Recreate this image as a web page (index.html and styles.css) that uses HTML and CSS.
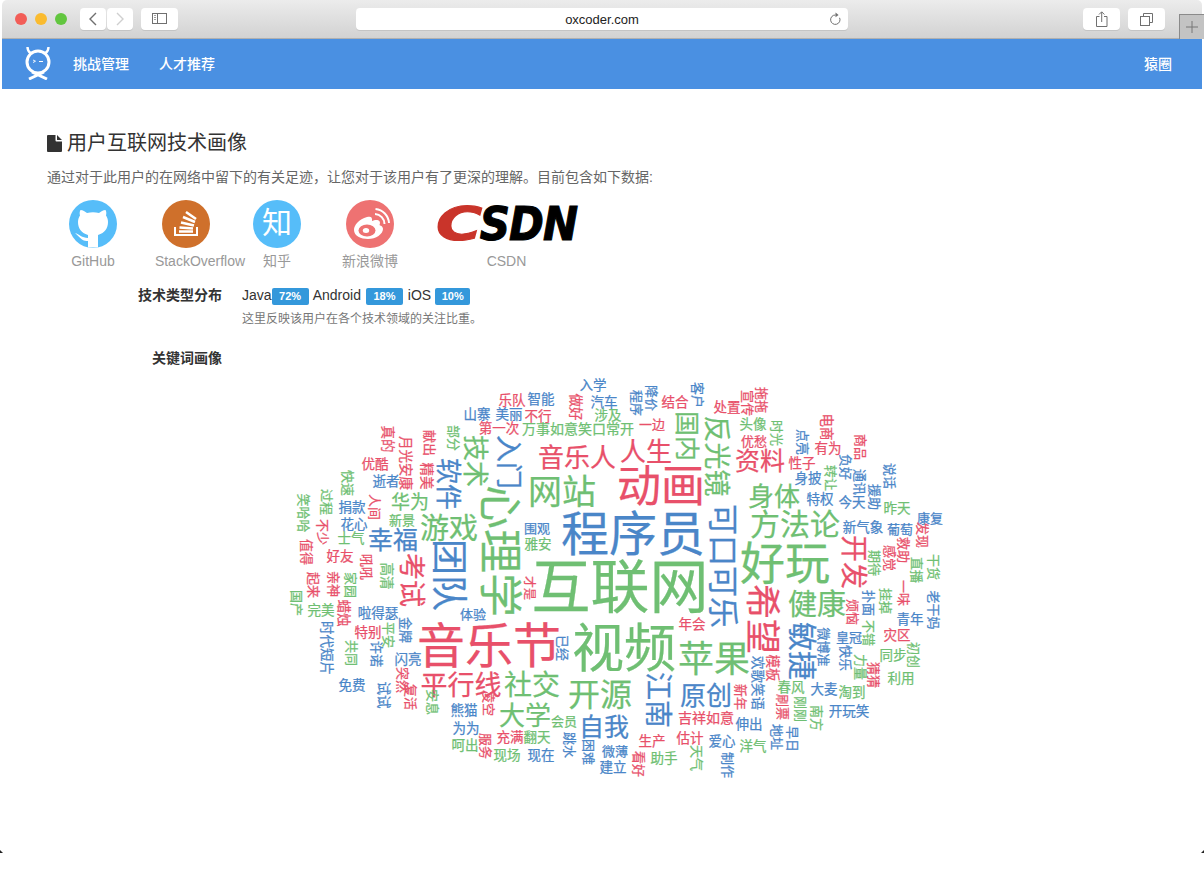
FILE: index.html
```html
<!DOCTYPE html>
<html>
<head>
	<title>用户互联网技术画像</title>
	<meta charset="utf-8">
	<link rel="stylesheet" href="styles.css">
</head>
<body>
	<div class="window">
		<div class="toolbar">
			<div class="lights">
				<span class="light red"></span>
				<span class="light yellow"></span>
				<span class="light green"></span>
			</div>
			<div class="nav-buttons">
				<span class="tool-btn arrow"><svg width="10" height="14" viewBox="0 0 10 14"><path d="M8 1 L2 7 L8 13" fill="none" stroke="#6f6f6f" stroke-width="1.4"/></svg></span>
				<span class="tool-btn arrow"><svg width="10" height="14" viewBox="0 0 10 14"><path d="M2 1 L8 7 L2 13" fill="none" stroke="#cfcfcf" stroke-width="1.4"/></svg></span>
			</div>
			<span class="tool-btn sidebar-btn"><svg width="15" height="12" viewBox="0 0 15 12"><rect x=".5" y=".5" width="14" height="10" fill="none" stroke="#707070"/><path d="M5.5 .5 V10.5" stroke="#707070"/><path d="M2 2.500 H4 M2 4.500 H4 M2 6.500 H4" stroke="#a0a0a0"/></svg></span>
			<div class="address">
				<span class="address-text">oxcoder.com</span>
				<svg class="reload" width="12" height="14" viewBox="0 0 12 14"><path d="M6.5 3 A4.7 4.7 0 1 0 10.6 5.8" fill="none" stroke="#707070" stroke-width="1"/><path d="M6.5 .6 L9.6 3 L6.5 5.2 Z" fill="#707070"/></svg>
			</div>
			<span class="tool-btn wide-btn"><svg width="12" height="16" viewBox="0 0 12 16"><path d="M3.5 5.5 H.5 V15.5 H11 V5.5 H8" fill="none" stroke="#707070"/><path d="M5.7 11 V1 M3 3.5 L5.7 .8 L8.4 3.5" fill="none" stroke="#707070"/></svg></span>
			<span class="tool-btn wide-btn"><svg width="13" height="13" viewBox="0 0 13 13"><rect x=".5" y="3.5" width="9" height="9" fill="none" stroke="#707070"/><path d="M3.5 3.5 V.5 H12.5 V9.5 H9.5" fill="none" stroke="#707070"/></svg></span>
			<span class="new-tab"><svg width="12" height="12" viewBox="0 0 12 12"><path d="M6 0 V12 M0 6 H12" stroke="#767676"/></svg></span>
		</div>

		<div class="navbar">
			<svg class="logo" width="28" height="34" viewBox="0 0 28 34">
				<path d="M3.500 1 Q3.500 5 6.500 7 M24.500 1 Q24.500 5 21.500 7" fill="none" stroke="#fff" stroke-width="2.400"/>
				<circle cx="14" cy="16" r="11" fill="none" stroke="#fff" stroke-width="3"/>
				<path d="M8 26 L23 33 M20 26 L5 33" fill="none" stroke="#fff" stroke-width="3"/>
				<path d="M9 14 L11.500 15.200 L9 16.500" fill="none" stroke="#fff" stroke-width=".9"/>
				<path d="M15 15.500 H19" stroke="#fff" stroke-width="1"/>
			</svg>
			<a class="nav-link">挑战管理</a>
			<a class="nav-link">人才推荐</a>
			<a class="nav-link nav-right">猿圈</a>
		</div>

		<div class="content">
			<h1 class="title">
				<svg width="15" height="17" viewBox="0 0 15 17"><path d="M0 1 Q0 0 1 0 H8.500 V5.500 Q8.500 6.500 9.500 6.500 H15 V16 Q15 17 14 17 H1 Q0 17 0 16 Z M10 0 L15 5 H10 Z" fill="#333"/></svg>
				用户互联网技术画像
			</h1>
			<p class="intro">通过对于此用户的在网络中留下的有关足迹，让您对于该用户有了更深的理解。目前包含如下数据:</p>

			<div class="sources">
				<div class="source s-github">
					<svg width="48" height="48" viewBox="0 0 48 48"><circle cx="24" cy="24" r="24" fill="#56bdf9"/><path d="M19 47.500 V41 C13 42 10 36 6 33 C10 34 13 38 19 38 V35 C12 33 9 28 9 22 C9 19 10 17 11 15.500 C10.500 13.500 10.500 11.500 11.500 10 C14 10 16 11.500 18 13 C22 12 26 12 30 13 C32 11.500 34 10 36.500 10 C37.500 11.500 37.500 13.500 37 15.500 C38 17 39 19 39 22 C39 28 36 33 29 35 V47.500 Z" fill="#fff"/></svg>
					<span>GitHub</span>
				</div>
				<div class="source s-stack">
					<svg width="48" height="48" viewBox="0 0 48 48"><circle cx="24" cy="24" r="24" fill="#cf702b"/><path d="M13 27 V35 H35 V27" fill="none" stroke="#fff" stroke-width="2"/><path d="M17 31.500 H31 M17.500 27.500 L31 28.500 M19 22.500 L32 25.500 M21 17 L33 22 M24 12 L34 19" fill="none" stroke="#fff" stroke-width="2.600"/></svg>
					<span>StackOverflow</span>
				</div>
				<div class="source s-zhihu">
					<span class="zhihu-mark">知</span>
					<span>知乎</span>
				</div>
				<div class="source s-weibo">
					<svg width="48" height="48" viewBox="0 0 48 48"><circle cx="24" cy="24" r="24" fill="#ee7272"/><path d="M21 17 C13 19 8 25 8 30 C8 36 15 39 22 39 C30 39 37 34 37 29 C37 26 34 25.500 33.500 25 C35 21.500 33 19.500 29 20 L26 21 C26.500 17 25 16 21 17 Z" fill="#fff"/><ellipse cx="21" cy="30.500" rx="8.500" ry="6" fill="#ee7272"/><ellipse cx="20" cy="30.500" rx="3.200" ry="2.500" fill="#fff"/><path d="M29 14 A10 10 0 0 1 38.500 24 M29.500 9 A15 15 0 0 1 43 23" fill="none" stroke="#fff" stroke-width="2"/></svg>
					<span>新浪微博</span>
				</div>
				<div class="source s-csdn">
					<div class="csdn-logo"><span class="csdn-c">C</span><span>SDN</span></div>
					<span>CSDN</span>
				</div>
			</div>

			<div class="row row-tech">
				<div class="row-label">技术类型分布</div>
				<div class="row-body">
					<div class="tech-list">
						Java<span class="badge b-java">72%</span>
						Android<span class="badge b-android">18%</span>
						iOS<span class="badge b-ios">10%</span>
					</div>
					<p class="tech-note">这里反映该用户在各个技术领域的关注比重。</p>
				</div>
			</div>

			<div class="row row-keywords">
				<div class="row-label">关键词画像</div>
			</div>

			<div class="cloud" id="cloud"></div>
		</div>
		<div class="corner corner-left"></div>
		<div class="corner corner-right"></div>
	</div>
	<script src="cloud.js"></script>
</body>
</html>
```

FILE: styles.css
```css
* {
	box-sizing: border-box;
}
html, body {
	margin: 0;
	height: 100%;
	background: #fff;
	overflow: hidden;
}
body {
	font-family: "Liberation Sans", "Noto Sans CJK SC", sans-serif;
	color: #333;
}
.window {
	position: relative;
	height: 852px;
	margin: 0 2px;
}
.toolbar {
	position: relative;
	height: 39px;
	display: flex;
	align-items: center;
	padding: 0 0 0 13px;
	background: linear-gradient(#ececec, #d2d2d2);
	border-bottom: 1px solid #b0b0b0;
	border-radius: 5px 5px 0 0;
}
.lights {
	display: flex;
	gap: 8px;
	margin-right: 13px;
}
.light {
	width: 12px;
	height: 12px;
	border-radius: 50%;
}
.red { background: #f25d57; }
.yellow { background: #fabb2f; }
.green { background: #62c63f; }
.nav-buttons {
	display: flex;
	gap: 1px;
	margin-right: 8px;
}
.tool-btn {
	display: flex;
	align-items: center;
	justify-content: center;
	height: 22px;
	background: #fff;
	border-radius: 4px;
	box-shadow: 0 1px 0 #c4c4c4;
}
.arrow {
	width: 26px;
}
.sidebar-btn {
	width: 37px;
}
.address {
	position: relative;
	width: 492px;
	height: 22px;
	margin-left: 178px;
	margin-right: 235px;
	display: flex;
	align-items: center;
	justify-content: center;
	background: #fff;
	border-radius: 4px;
	box-shadow: 0 1px 0 #c4c4c4;
}
.address-text {
	font-size: 13px;
	color: #222;
}
.reload {
	position: absolute;
	right: 7px;
	top: 4px;
}
.wide-btn {
	width: 37px;
	margin-right: 8px;
}
.new-tab {
	position: absolute;
	right: -2px;
	top: 14px;
	width: 25px;
	height: 25px;
	display: flex;
	align-items: center;
	justify-content: center;
	background: #c3c3c3;
	border: 1px solid #8a8a8a;
	border-bottom: none;
	border-right: none;
}
.navbar {
	height: 50px;
	display: flex;
	align-items: center;
	padding: 0 30px 2px 22px;
	background: #4a90e2;
}
.logo {
	margin-right: 21px;
}
.nav-link {
	font-size: 14px;
	font-weight: 500;
	color: #fff;
	margin-right: 30px;
}
.nav-right {
	margin-left: auto;
	margin-right: 0;
}
.content {
	padding: 41px 45px 0;
}
.title {
	display: flex;
	align-items: center;
	gap: 5px;
	margin: 0;
	height: 27px;
	font-size: 20px;
	font-weight: 400;
	line-height: 27px;
}
.intro {
	margin: 10px 0 0;
	font-size: 14px;
	line-height: 20px;
	color: #666;
}
.sources {
	display: flex;
	margin-top: 13px;
	height: 74px;
}
.source {
	display: flex;
	flex-direction: column;
	align-items: center;
	font-size: 14px;
	line-height: 16px;
	color: #999;
}
.source svg {
	margin-bottom: 5px;
}
.s-github { width: 48px; margin-left: 22px; }
.s-stack { width: 90px; margin-left: 38px; }
.s-stack svg { margin-right: 28px; }
.s-zhihu { width: 48px; margin-left: 8px; }
.s-weibo { width: 56px; margin-left: 41px; }
.s-csdn { width: 143px; margin-left: 37px; }
.zhihu-mark {
	width: 48px;
	height: 48px;
	margin-bottom: 5px;
	border-radius: 50%;
	background: #56bdf9;
	color: #fff;
	font-size: 30px;
	line-height: 46px;
	text-align: center;
}
.csdn-logo {
	height: 53px;
	display: flex;
	align-items: center;
	font-family: "DejaVu Sans", sans-serif;
	font-size: 42px;
	font-weight: bold;
	font-style: italic;
	letter-spacing: -1px;
	color: #000;
	-webkit-text-stroke: 1px currentColor;
	transform: scaleY(1.08);
	padding-bottom: 3px;
}
.csdn-c {
	display: inline-block;
	width: 44px;
	color: #c9342a;
	transform: scaleX(1.5);
	transform-origin: left center;
}
.row {
	display: flex;
}
.row-label {
	width: 175px;
	text-align: right;
	font-size: 14px;
	font-weight: bold;
	line-height: 17px;
	color: #333;
}
.row-body {
	margin-left: 20px;
}
.row-tech {
	margin-top: 13px;
}
.tech-list {
	font-size: 14px;
	line-height: 17px;
	color: #333;
}
.badge {
	display: inline-block;
	height: 17px;
	margin-right: 1px;
	vertical-align: top;
	margin-top: 1px;
	border-radius: 2px;
	background: #3498db;
	color: #fff;
	font-size: 11px;
	font-weight: bold;
	line-height: 17px;
	text-align: center;
}
.b-java { width: 37px; }
.b-android { width: 37px; margin-left: 5px; }
.b-ios { width: 35px; margin-left: 4px; }
.tech-note {
	margin: 6px 0 0;
	font-size: 12px;
	line-height: 16px;
	color: #777;
}
.row-keywords {
	margin-top: 23px;
}
.cloud {
	position: absolute;
	left: -2px;
	top: 0;
	width: 1204px;
	height: 852px;
	font-family: "Noto Sans CJK SC", sans-serif;
}
.word {
	position: absolute;
	line-height: 1;
	white-space: nowrap;
	-webkit-text-stroke: .25px currentColor;
	transform: translate(-50%, -50%);
}
.word.vert {
	transform: translate(-50%, -50%) rotate(90deg);
}
.word.g { color: #6fbf73; }
.word.b { color: #4a86c8; }
.word.r { color: #e8506a; }
.corner {
	position: absolute;
	bottom: -1px;
	width: 3px;
	height: 3px;
	background: #222;
}
.corner-left {
	left: -2px;
	clip-path: polygon(0 0, 100% 100%, 0 100%);
}
.corner-right {
	right: -2px;
	clip-path: polygon(100% 0, 100% 100%, 0 100%);
}
```

FILE: cloud.js
```js
// word, x, y, font size, colour, vertical
const words = [
	["互联网", 620, 582, 59, "g"], ["程序员", 633, 530, 48, "b"], ["音乐节", 489, 642, 48, "r"],
	["视频", 624, 645, 52, "g"], ["动画", 661, 483, 44, "r"], ["好玩", 785, 560, 45, "g"],
	["苹果", 714, 656, 36, "g"], ["网站", 562, 490, 34, "g"], ["开源", 600, 692, 32, "g"],
	["原创", 706, 694, 26, "b"], ["平行线", 461, 683, 27, "r"], ["社交", 532, 683, 28, "g"],
	["大学", 525, 714, 26, "g"], ["自我", 604, 725, 25, "b"], ["音乐人", 577, 456, 26, "r"],
	["人生", 646, 450, 26, "r"], ["方法论", 795, 522, 30, "g"], ["身体", 774, 495, 26, "g"],
	["资料", 760, 459, 25, "r"], ["健康", 817, 602, 29, "g"], ["游戏", 449, 526, 29, "g"],
	["幸福", 393, 538, 25, "b"], ["华为", 410, 500, 19, "g"],

	["心理学", 503, 551, 44, "g", 1], ["团队", 452, 575, 36, "b", 1], ["考试", 413, 580, 27, "r", 1],
	["软件", 450, 484, 26, "b", 1], ["技术", 477, 461, 26, "g", 1], ["入门", 510, 462, 27, "b", 1],
	["反光镜", 718, 456, 27, "g", 1], ["国内", 688, 436, 25, "g", 1], ["可口可乐", 725, 566, 31, "b", 1],
	["希望", 765, 619, 35, "r", 1], ["敏捷", 803, 651, 29, "b", 1], ["江南", 660, 700, 28, "b", 1],
	["开发", 855, 562, 27, "r", 1],

	["入学", 593, 385, 13.5, "b"], ["乐队", 512, 400, 13.5, "r"], ["智能", 541, 399, 13.5, "b"],
	["汽车", 604, 402, 13.5, "b"], ["做好", 576, 407, 13.5, "r", 1], ["山寨", 477, 414, 13.5, "b"],
	["美丽", 509, 414, 13.5, "b"], ["不行", 538, 416, 13.5, "r"], ["涉及", 608, 415, 13.5, "g"],
	["第一次", 499, 428, 13.5, "r"], ["万事如意笑口常开", 578, 428, 14, "g"], ["部分", 454, 438, 13, "g", 1],
	["真的", 388, 439, 13.5, "r", 1], ["月光安康", 406, 463, 13.5, "r", 1], ["献出", 430, 443, 13, "r", 1],
	["精美", 427, 476, 13.5, "r", 1], ["优酷", 375, 464, 13.5, "r"], ["逝者", 386, 481, 13.5, "b"],
	["快速", 348, 483, 13, "g", 1], ["过程", 327, 502, 13, "g", 1], ["捐款", 352, 507, 13.5, "b"],
	["人间", 375, 507, 13, "r", 1], ["笑哈哈", 304, 513, 13, "g", 1], ["不少", 323, 532, 13, "r", 1],
	["花心", 354, 524, 13.5, "b"], ["新景", 402, 519, 13, "g"], ["士气", 351, 538, 13.5, "g"],
	["值得", 307, 552, 13, "r", 1], ["好友", 340, 556, 13.5, "r"], ["吼吼", 367, 567, 13, "r", 1],
	["高清", 387, 576, 13.5, "g", 1], ["围观", 537, 527, 13, "b"], ["雅安", 538, 544, 13.5, "g"],
	["才是", 530, 588, 12, "r", 1], ["起来", 314, 585, 13, "r", 1], ["亲神", 334, 584, 13, "r", 1],
	["家园", 351, 585, 13, "g", 1], ["国产", 297, 603, 13, "g", 1], ["完美", 321, 610, 13.5, "g"],
	["蜡烛", 344, 613, 13.5, "r", 1], ["啦得瑟", 378, 613, 13.5, "b"], ["金牌", 406, 630, 13, "b", 1],
	["体验", 473, 613, 13, "b"], ["特别", 368, 632, 13.5, "r"], ["平安", 389, 635, 13, "g", 1],
	["时代短片", 327, 648, 13.5, "b", 1], ["共同", 352, 653, 13, "g", 1], ["许诺", 377, 654, 13, "b", 1],
	["闪亮", 408, 659, 13.5, "b"], ["已经", 563, 648, 13, "b", 1], ["突然", 403, 680, 13, "r", 1],
	["复活", 411, 697, 13, "r", 1], ["免费", 352, 685, 13.5, "b"], ["试试", 384, 695, 13.5, "b", 1],
	["安息", 433, 702, 13, "g", 1], ["熊猫", 464, 710, 13.5, "b"], ["凌空", 489, 703, 13, "r", 1],
	["会员", 564, 720, 13, "g"], ["为为", 466, 728, 13.5, "b"], ["呵出", 465, 745, 13.5, "g"],
	["服务", 486, 746, 13, "r", 1], ["充满", 510, 737, 13.5, "r"], ["翻天", 537, 737, 13.5, "g"],
	["现场", 507, 755, 13.5, "g"], ["现在", 541, 755, 13.5, "b"], ["跳水", 570, 745, 13, "b", 1],
	["困难", 589, 752, 13, "b", 1], ["微薄", 615, 750, 13, "b"], ["建立", 613, 767, 13.5, "b"],

	["年会", 692, 624, 13.5, "r"], ["模板", 773, 668, 13.5, "r", 1], ["欢歌笑语", 758, 683, 13.5, "b", 1],
	["新年", 741, 697, 13, "r", 1], ["吉祥如意", 706, 717, 14, "r"], ["伸出", 749, 724, 13.5, "b"],
	["生产", 652, 741, 13.5, "r"], ["估计", 690, 738, 13.5, "r"], ["爱心", 722, 741, 13.5, "b"],
	["洋气", 753, 746, 13.5, "g"], ["助手", 664, 758, 13.5, "g"], ["天气", 697, 758, 13, "g", 1],
	["看好", 639, 764, 13, "r", 1], ["制作", 728, 765, 13, "b", 1], ["地址", 777, 737, 13, "b", 1],
	["早日", 793, 739, 13, "b", 1], ["刷票", 783, 707, 13, "r", 1], ["刚刚", 801, 709, 13, "g", 1],
	["南方", 817, 718, 13, "g", 1], ["春风", 791, 687, 13.5, "g"], ["大麦", 824, 689, 13.5, "b"],
	["淘到", 852, 692, 13.5, "g"], ["开玩笑", 849, 711, 13.5, "b"], ["利用", 901, 678, 13.5, "g"],
	["猜猜", 874, 675, 13, "r", 1], ["力量", 861, 667, 13, "g", 1], ["同步", 893, 655, 13.5, "g"],
	["初创", 914, 655, 13, "g", 1], ["快乐", 846, 658, 13, "b", 1], ["皇冠", 849, 636, 13, "b"],
	["微博准", 824, 647, 13, "b", 1], ["灾区", 897, 635, 13.5, "r"], ["不错", 869, 633, 13, "g", 1],
	["青年", 910, 619, 13.5, "b"], ["老干妈", 934, 610, 13, "b", 1], ["扑面", 869, 603, 13, "b", 1],
	["烦恼", 853, 612, 13, "r", 1], ["挂掉", 886, 601, 13, "g", 1], ["一味", 904, 593, 13, "r", 1],

	["程序", 637, 403, 13, "b", 1], ["降价", 652, 398, 13, "b", 1], ["客户", 698, 395, 13, "b", 1],
	["结合", 675, 402, 13.5, "r"], ["处置", 727, 407, 13.5, "r"], ["宣传", 748, 403, 13, "r", 1],
	["拖拖", 762, 400, 13, "r", 1], ["一边", 652, 423, 13, "r"], ["头像", 753, 424, 13.5, "g"],
	["时光", 777, 433, 13, "g", 1], ["优愁", 754, 440, 13, "r"], ["点亮", 803, 442, 13, "b", 1],
	["电商", 827, 427, 13.5, "r", 1], ["有为", 828, 448, 13.5, "r"], ["商品", 861, 447, 13, "r", 1],
	["性子", 802, 463, 13.5, "r"], ["负好", 846, 467, 13, "b", 1], ["转让", 831, 478, 13, "g", 1],
	["身披", 808, 478, 13.5, "b"], ["通讯", 860, 482, 13, "b", 1], ["说话", 890, 476, 13, "b", 1],
	["援助", 875, 497, 13, "b", 1], ["特权", 820, 499, 13.5, "b"], ["今天", 852, 502, 13.5, "b"],
	["昨天", 897, 508, 13.5, "g"], ["康复", 930, 517, 13, "b"], ["发现", 923, 535, 13, "r", 1],
	["新气象", 863, 527, 13.5, "b"], ["葡萄", 900, 528, 13, "b"], ["救助", 904, 550, 13, "r", 1],
	["感觉", 890, 558, 13, "r", 1], ["期待", 875, 563, 13, "g", 1], ["直播", 917, 570, 13, "g", 1],
	["干货", 934, 567, 13, "g", 1]
];

const cloud = document.getElementById("cloud");

words.forEach(function (w) {
	const el = document.createElement("span");
	el.className = "word " + w[4] + (w[5] ? " vert" : "");
	el.textContent = w[0];
	el.style.left = w[1] + "px";
	el.style.top = w[2] + "px";
	el.style.fontSize = w[3] + "px";
	cloud.appendChild(el);
});
```
